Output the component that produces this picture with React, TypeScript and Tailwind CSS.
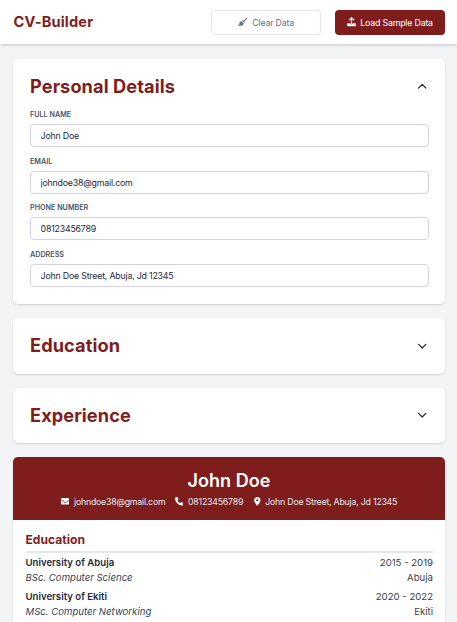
import { useState } from "react";
import type { ReactNode } from "react";
import { FaBroom, FaEnvelope, FaLocationDot, FaPhone, FaUpload } from "react-icons/fa6";
import { FiChevronDown, FiChevronUp } from "react-icons/fi";

const person = {
  name: "John Doe",
  email: "johndoe38@gmail.com",
  phone: "08123456789",
  address: "John Doe Street, Abuja, Jd 12345",
};

const schools = [
  { school: "University of Abuja", degree: "BSc. Computer Science", dates: "2015 - 2019", place: "Abuja" },
  { school: "University of Ekiti", degree: "MSc. Computer Networking", dates: "2020 - 2022", place: "Ekiti" },
];

function Field({ label, value }: { label: string; value: string }) {
  return (
    <label className="block h-[46.6px]">
      <span className="block text-[7.2px] leading-[11px] font-semibold text-[#4b5563] uppercase">{label}</span>
      <input
        defaultValue={value}
        className="mt-[4px] block h-[23px] w-full rounded-[4px] border border-[#d1d5db] bg-white px-[9.6px] text-[8.8px] tracking-[-0.2px] text-[#1f2937] outline-none"
      />
    </label>
  );
}

function Section({ title, initial = false, children }: { title: string; initial?: boolean; children?: ReactNode }) {
  const [open, setOpen] = useState(initial);
  return (
    <section className="rounded-[5px] bg-white pr-[16px] pl-[17px] shadow-[0_1px_2px_rgba(0,0,0,0.15)]">
      <button className="flex h-[55.2px] w-full items-center justify-between" onClick={() => setOpen(!open)}>
        <h2 className="pb-[1.4px] text-[18.2px] leading-[24px] font-bold tracking-[0.08px] text-[#7f1d1d]">{title}</h2>
        {open ? <FiChevronUp className="size-[14.4px]" /> : <FiChevronDown className="size-[14.4px]" />}
      </button>
      {open && children}
    </section>
  );
}

export default function App() {
  return (
    <div className="h-[622px] overflow-hidden bg-[#f3f4f6] font-['Inter',sans-serif] text-[#1f2937]">
      <header className="flex h-[44px] items-center justify-between bg-white pr-[12px] pl-[13.5px] shadow-[0_1px_3px_rgba(0,0,0,0.2)]">
        <h1 className="pt-[1px] text-[14.6px] font-bold tracking-[0.16px] text-[#7f1d1d]">CV-Builder</h1>
        <div className="flex gap-[14px]">
          <button className="flex h-[25px] w-[110px] items-center justify-center gap-[4.8px] rounded-[4px] border border-[#e5e7eb] text-[8.8px] tracking-[-0.2px] text-[#6b7280]">
            <FaBroom className="size-[9.4px]" />
            <span className="pt-[1px]">Clear Data</span>
          </button>
          <button className="flex h-[25px] w-[110px] items-center justify-center gap-[4px] rounded-[4px] bg-[#7f1d1d] text-[8.8px] tracking-[-0.2px] text-white">
            <FaUpload className="size-[9.2px]" />
            <span className="pt-[1px]">Load Sample Data</span>
          </button>
        </div>
      </header>
      <main className="flex flex-col gap-[14.4px] pt-[15px] pr-[12px] pl-[13px]">
        <Section title="Personal Details" initial>
          <div className="-mt-[5px] h-[194.8px]">
            <Field label="Full name" value={person.name} />
            <Field label="Email" value={person.email} />
            <Field label="Phone number" value={person.phone} />
            <Field label="Address" value={person.address} />
          </div>
        </Section>
        <Section title="Education" />
        <Section title="Experience" />
        <article className="-mt-[0.6px] h-[240px] overflow-hidden rounded-[5px] bg-white shadow-[0_1px_2px_rgba(0,0,0,0.15)]">
          <div className="flex h-[63px] flex-col items-center bg-[#7f1d1d] pt-[12px] text-white">
            <h2 className="text-[18px] leading-[24px] font-semibold tracking-[0.06px]">{person.name}</h2>
            <div className="mt-[2px] flex gap-[9.4px] text-[8.8px] leading-[13px] tracking-[-0.23px]">
              <span className="flex items-center gap-[4.6px]"><FaEnvelope className="size-[8.6px]" /><span className="text-[#e5e7eb]">{person.email}</span></span>
              <span className="flex items-center gap-[4.6px]"><FaPhone className="size-[8.6px]" /><span className="text-[#e5e7eb]">{person.phone}</span></span>
              <span className="flex items-center gap-[4.2px]"><FaLocationDot className="size-[8.6px]" /><span className="text-[#e5e7eb]">{person.address}</span></span>
            </div>
          </div>
          <div className="pr-[12px] pl-[12.5px] pt-[11px]">
            <h3 className="border-b-2 border-[#e5e7eb] pb-[3px] text-[12.1px] leading-[17px] font-bold text-[#7f1d1d]">Education</h3>
            <ul className="mt-[3.4px] flex flex-col gap-[4.8px] text-[9.6px] leading-[14.6px] text-[#374151]">
              {schools.map((s) => (
                <li key={s.school}>
                  <div className="flex justify-between"><strong className="font-semibold text-[#1f2937]">{s.school}</strong><span>{s.dates}</span></div>
                  <div className="flex justify-between"><em>{s.degree}</em><span>{s.place}</span></div>
                </li>
              ))}
            </ul>
          </div>
        </article>
      </main>
    </div>
  );
}
